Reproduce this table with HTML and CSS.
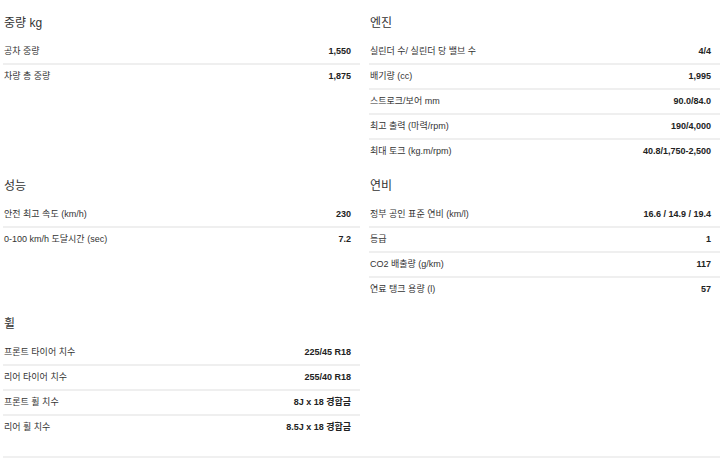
FILE: index.html
```html
<!DOCTYPE html>
<html lang="ko">
<head>
<meta charset="utf-8">
<link rel="stylesheet" href="styles.css">
</head>
<body>
<div class="specs">
  <section class="group">
    <h2 class="group-title">중량 kg</h2>
    <div class="row"><span class="label">공차 중량</span><span class="value">1,550</span></div>
    <div class="row"><span class="label">차량 총 중량</span><span class="value">1,875</span></div>
  </section>
  <section class="group">
    <h2 class="group-title">엔진</h2>
    <div class="row"><span class="label">실린더 수/ 실린더 당 밸브 수</span><span class="value">4/4</span></div>
    <div class="row"><span class="label">배기량 (cc)</span><span class="value">1,995</span></div>
    <div class="row"><span class="label">스트로크/보어 mm</span><span class="value">90.0/84.0</span></div>
    <div class="row"><span class="label">최고 출력 (마력/rpm)</span><span class="value">190/4,000</span></div>
    <div class="row"><span class="label">최대 토크 (kg.m/rpm)</span><span class="value">40.8/1,750-2,500</span></div>
  </section>
  <section class="group">
    <h2 class="group-title">성능</h2>
    <div class="row"><span class="label">안전 최고 속도 (km/h)</span><span class="value">230</span></div>
    <div class="row"><span class="label">0-100 km/h 도달시간 (sec)</span><span class="value">7.2</span></div>
  </section>
  <section class="group">
    <h2 class="group-title">연비</h2>
    <div class="row"><span class="label">정부 공인 표준 연비 (km/l)</span><span class="value">16.6 / 14.9 / 19.4</span></div>
    <div class="row"><span class="label">등급</span><span class="value">1</span></div>
    <div class="row"><span class="label">CO2 배출량 (g/km)</span><span class="value">117</span></div>
    <div class="row"><span class="label">연료 탱크 용량 (l)</span><span class="value">57</span></div>
  </section>
  <section class="group">
    <h2 class="group-title">휠</h2>
    <div class="row"><span class="label">프론트 타이어 치수</span><span class="value">225/45 R18</span></div>
    <div class="row"><span class="label">리어 타이어 치수</span><span class="value">255/40 R18</span></div>
    <div class="row"><span class="label">프론트 휠 치수</span><span class="value">8J x 18 경합금</span></div>
    <div class="row"><span class="label">리어 휠 치수</span><span class="value">8.5J x 18 경합금</span></div>
  </section>
</div>
</body>
</html>
```

FILE: styles.css
```css
html, body {
  margin: 0;
  padding: 0;
  background: #fff;
}

body {
  font-family: "Liberation Sans", "Noto Sans CJK KR", sans-serif;
  color: #333;
}

.specs {
  display: grid;
  grid-template-columns: 357px 351px;
  column-gap: 9px;
  margin-left: 3px;
  padding: 15px 0 2px 0;
  border-bottom: 2px solid #f0f0f0;
  align-items: start;
}

.group {
  padding-bottom: 15px;
}

.group-title {
  margin: 0 0 9px 1px;
  font-size: 12px;
  line-height: 16px;
  font-weight: normal;
  color: #333;
}

.row {
  display: flex;
  justify-content: space-between;
  align-items: center;
  padding: 5px 9px 5px 1px;
  line-height: 13px;
  font-size: 9px;
  border-bottom: 2px solid #efefef;
}

.row:last-child {
  border-bottom: none;
}

.label {
  color: #333;
}

.value {
  font-weight: bold;
  color: #222;
}
```
